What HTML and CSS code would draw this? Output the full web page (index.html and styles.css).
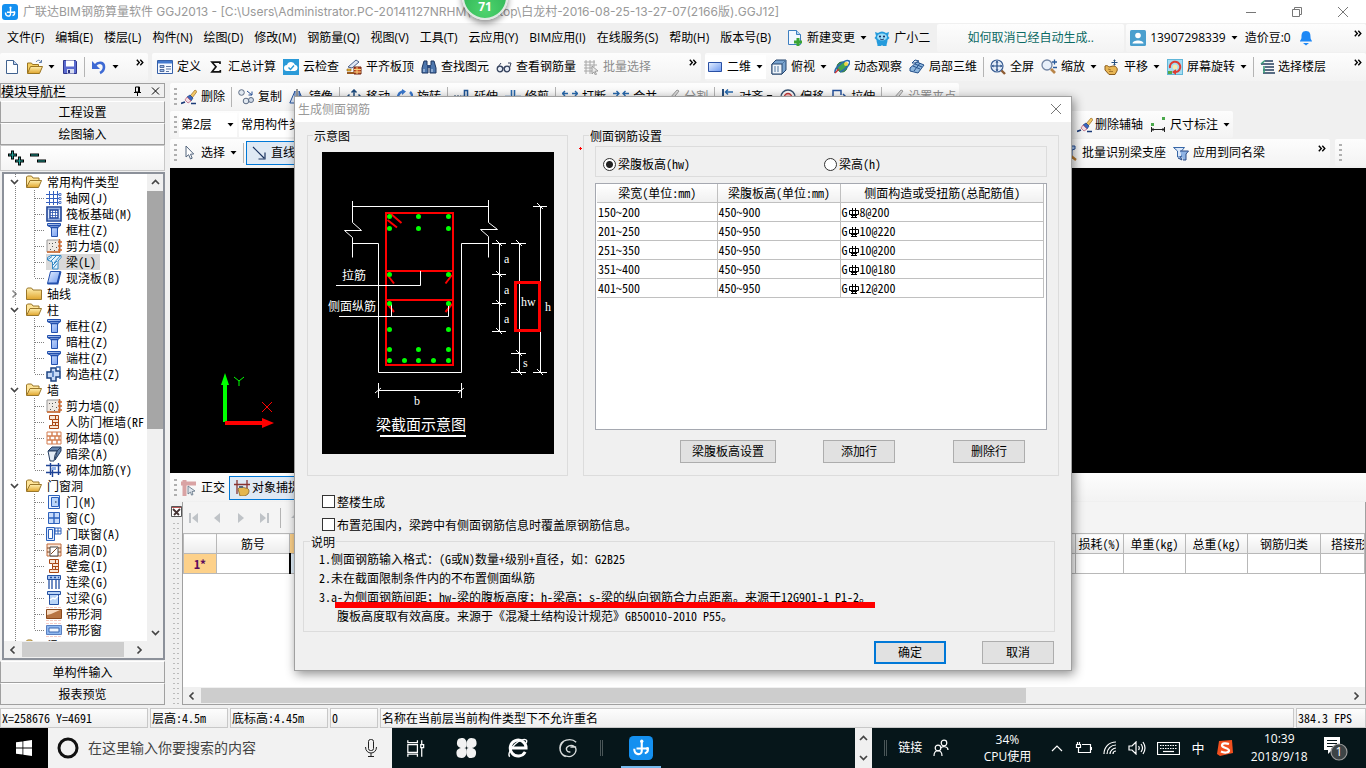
FILE: index.html
```html
<!DOCTYPE html>
<html lang="zh-CN">
<head>
<meta charset="utf-8">
<title>广联达BIM钢筋算量软件 GGJ2013</title>
<link rel="stylesheet" href="styles.css">
</head>
<body>
<svg class="sprite" aria-hidden="true">
  <defs>
    <linearGradient id="blueFill" x1="0" y1="0" x2="1" y2="1"><stop offset="0" stop-color="#e8f1ff"/><stop offset="1" stop-color="#6c98f0"/></linearGradient>
    <linearGradient id="goldFill" x1="0" y1="0" x2="0" y2="1"><stop offset="0" stop-color="#fff0b0"/><stop offset="1" stop-color="#e0a52c"/></linearGradient>
  </defs>
  <symbol id="app" viewBox="0 0 16 16"><rect width="16" height="16" rx="3" fill="#1490f0"/><path d="M8.500 3.500V10c0 3-5 3-5-1.500M5 8.300h7.500c.3 2-.8 3-2 3.200" fill="none" stroke="#fff" stroke-width="1.400"/><circle cx="8.500" cy="3.500" r="1.100" fill="#fff"/><circle cx="12.300" cy="8.300" r="1" fill="#fff"/></symbol>
  <symbol id="new" viewBox="0 0 16 16"><path d="M2.500 1.500h7l4 4v9h-11z" fill="#fdfeff" stroke="#41628f"/><path d="M9.500 1.500v4h4" fill="#bcd0ee" stroke="#41628f"/></symbol>
  <symbol id="open" viewBox="0 0 16 16"><path d="M.5 14V4h4l1 1.500h6V7" fill="#f5cf62" stroke="#9a7420"/><path d="M.5 14.500 3.500 7.500h12l-3 7z" fill="url(#goldFill)" stroke="#9a7420"/><path d="M9 3c2-2.500 4-2 5 0M14.500 1v2.500H12" fill="none" stroke="#5d7ba8"/></symbol>
  <symbol id="save" viewBox="0 0 16 16"><path d="M1.500 1.500h12l1 1v12h-13z" fill="#5b6bd0" stroke="#30378c"/><path d="M4 1.500h8v6H4z" fill="#fff"/><path d="M5 10h7v4.500H5z" fill="#d7dcf0"/><path d="M6 11h2v3H6z" fill="#27307c"/></symbol>
  <symbol id="undo" viewBox="0 0 16 16"><path d="M4 6.500C7.500 2.500 13 3 13 8c0 3-2 5-4 6" fill="none" stroke="#3e6ad4" stroke-width="2.600"/><path d="M1 2v8h8z" fill="#3e6ad4"/></symbol>
  <symbol id="define" viewBox="0 0 16 16"><path d="M.5 1.500h15v13H.5z" fill="#f4f8ff" stroke="#355fa8"/><path d="M1 2h14v2.500H1z" fill="#4379ce"/><path d="M3 6.500h4v2H3zM3 10.500h4v2H3zM9 7.500h5M9 10h5M9 12.500h3" fill="#9bb9e8" stroke="#39568a" stroke-width=".8"/></symbol>
  <symbol id="sigma" viewBox="0 0 16 16"><path d="M12 5V3.200H4l4 4.600-4 5h8.300V11" fill="none" stroke="#111" stroke-width="1.700"/></symbol>
  <symbol id="cloud" viewBox="0 0 16 16"><rect width="16" height="16" fill="#2a9ad8"/><path d="M4 12a3 3 0 0 1 0-6 4.200 4.200 0 0 1 8-.3A3.200 3.200 0 0 1 12 12z" fill="#fff"/><path d="m5.500 8.500 2 2L11 6.500" fill="none" stroke="#2a9ad8" stroke-width="1.400"/></symbol>
  <symbol id="slabtop" viewBox="0 0 16 16"><path d="M2 8 10 1l3 2-7 6z" fill="#dfe7f3" stroke="#4a5f88"/><path d="M8 8h7v7H8z" fill="#c84e28" stroke="#6c2410"/><path d="M8 10.500h7M8 13h7M11 8v7" stroke="#f6d27c"/><path d="M1 13h7v2H1z" fill="#9a5a20"/><path d="M1 10h4v2H1z" fill="#f0bd3a" stroke="#8a5b13" stroke-width=".6"/></symbol>
  <symbol id="binoc" viewBox="0 0 16 16"><path d="M3 2h3v4l1 1v7H1V9zM10 2h3l2 7v5H9V7l1-1z" fill="#4d76ad" stroke="#1d355f"/><path d="M6 6h4v3H6z" fill="#2c4a7c"/><path d="M3 10v3M11 10v3" stroke="#cfe0f6"/></symbol>
  <symbol id="glasses" viewBox="0 0 16 16"><circle cx="4" cy="10" r="2.800" fill="#e6ecf6" stroke="#34415c" stroke-width="1.300"/><circle cx="11" cy="10" r="2.800" fill="#e6ecf6" stroke="#34415c" stroke-width="1.300"/><path d="M6.500 9h2M2 8 5 4M13.500 9l1.500-5-3 0" fill="none" stroke="#34415c"/></symbol>
  <symbol id="batch" viewBox="0 0 16 16"><path d="M1 3h11M1 6h13M1 9h8M1 12h8M3 1v14M7 1v14M11 1v7" stroke="#a8a8a8" fill="none"/><path d="m9 7 6 5-3 .3 1.500 3-1.200.6-1.400-3L9 15z" fill="#e8e8e8" stroke="#8c8c8c" stroke-width=".8"/></symbol>
  <symbol id="plane" viewBox="0 0 16 16"><path d="M1.500 3.500h13v9h-13z" fill="url(#blueFill)" stroke="#2a50a4"/></symbol>
  <symbol id="cube" viewBox="0 0 16 16"><path d="M1 5 5 1h10v10l-4 4H1z" fill="#7aa4cf" stroke="#24446d"/><path d="M1 5h10v10H1z" fill="#eef4fa" stroke="#24446d"/><path d="M11 5l4-4M4 7v6M7 7v6" stroke="#50769e"/></symbol>
  <symbol id="orbit" viewBox="0 0 16 16"><circle cx="8" cy="8" r="5" fill="#44a54e" stroke="#1d6a38"/><path d="M1 14C0 8 12 0 15 2s-4 9-9 11" fill="none" stroke="#2b6bb0" stroke-width="1.600"/><circle cx="12" cy="5" r="2" fill="#f0d645"/><path d="m1 14 4-4" stroke="#c33" stroke-width="1.500"/></symbol>
  <symbol id="part3d" viewBox="0 0 16 16"><path d="M1 9 8 3l7 3-6 8-8-2z" fill="#8db5dc" stroke="#24508a"/><path d="M4 7l7 3M6 5l7 3M5 12l6-8" stroke="#24508a" fill="none"/><path d="m3 4 3-3 4 1-4 2z" fill="#d9e8f7" stroke="#24508a"/></symbol>
  <symbol id="full" viewBox="0 0 16 16"><circle cx="7" cy="7" r="6" fill="#e5eef9" stroke="#3b5f94" stroke-width="1.200"/><path d="M7 2.500v9M2.500 7h9" stroke="#234a84" stroke-width="1.200"/><path d="M7 1.500 5.500 3.500h3zM7 12.500l-1.500-2h3zM1.500 7l2-1.500v3zM12.500 7l-2-1.500v3z" fill="#234a84"/><path d="m11.500 11.500 3.500 3.500" stroke="#8c5a32" stroke-width="2.400"/></symbol>
  <symbol id="zoom" viewBox="0 0 16 16"><circle cx="6" cy="6" r="5" fill="#e8f0fa" stroke="#7386a4" stroke-width="1.300"/><path d="m10 10 4 4" stroke="#b98548" stroke-width="2.600"/><path d="M11 3h5M13.500.5v5M12 8.500h4" stroke="#2c5d9d" stroke-width="1.300"/></symbol>
  <symbol id="pan" viewBox="0 0 16 16"><path d="M1 7c2-1 3 0 4 1l4-1c3 0 5 2 4 5l-2 3.500H5L1 11z" fill="#e8b655" stroke="#8a5c1c"/><path d="M4 10l3 1M5 12.500h4" stroke="#a8792c"/><path d="M10.500.5v6M7.500 3.500h6M9.500 1.500h2M9.500 5.500h2" stroke="#27507f"/></symbol>
  <symbol id="rotscreen" viewBox="0 0 16 16"><rect x=".5" y=".5" width="15" height="15" fill="#a3dcf2" stroke="#60b6d8"/><path d="M3 9a5.200 5.200 0 1 1 6 4" fill="none" stroke="#df3c32" stroke-width="2"/><path d="M9 10v6l-4-3z" fill="#df3c32"/><circle cx="8" cy="8" r="2.500" fill="#f6e9b0"/><path d="M1 12h4v3H1z" fill="#57a948"/></symbol>
  <symbol id="floors" viewBox="0 0 16 16"><path d="M5 2h8M1 5h13M5 8h9M3 11h11M3 14h12" stroke="#243f5e" stroke-width="1.600"/><path d="M1 5 5 1.500M4 7v7" stroke="#3a9a78" stroke-width="1.600"/></symbol>
  <symbol id="change" viewBox="0 0 16 16"><path d="M1.500.5h8l4 4v10h-12z" fill="#f3f8ff" stroke="#3d7fc0"/><path d="M9.500.5v4h4" fill="#b6d4f1" stroke="#3d7fc0"/><path d="M11 8v8M7 12h8" stroke="#3aa535" stroke-width="3"/></symbol>
  <symbol id="mascot" viewBox="0 0 16 16"><path d="M1 2 4 3a6 6 0 0 1 8 0l3-1-1 4 1.500 2-2 2c0 3-1 3-1 6H9l-1-1-1 1H3.500c0-3-1-3-1-6l-2-2L2 6z" fill="#259bdc"/><ellipse cx="8" cy="7" rx="5" ry="3.600" fill="#9bdcf8"/><circle cx="6" cy="6.500" r="1" fill="#125"/><circle cx="10" cy="6.500" r="1" fill="#125"/><path d="M6 9q2 1.500 4 0" fill="none" stroke="#125" stroke-width=".8"/></symbol>
  <symbol id="user" viewBox="0 0 16 16"><rect width="16" height="16" rx="1.500" fill="#4a9fce"/><circle cx="8" cy="5.500" r="2.800" fill="#fff"/><path d="M2.500 13.500c0-4 11-4 11 0z" fill="#fff"/></symbol>
  <symbol id="bell" viewBox="0 0 16 16"><path d="M8 1c4 0 4.500 3 4.500 6s1.500 3 1.500 4.500H2c0-1.500 1.500-1.500 1.500-4.500S4 1 8 1zM5 13h6l-3 2.500z" fill="#1e88f5"/></symbol>
  <symbol id="eraser" viewBox="0 0 16 16"><path d="M9 7 14 1l2 1.500-4.500 6z" fill="#f3c766" stroke="#9a6b22" stroke-width=".7"/><path d="m6 8 3-2 3 3-2 3z" fill="#3a66bd" stroke="#1d3d80" stroke-width=".7"/><path d="m4 11 2-3 4 4-3 2z" fill="#f4dfe5" stroke="#b0526e" stroke-width=".7"/><path d="M0 14.500 4 13M10 14.500h5" stroke="#1a3a78" stroke-width="1.700"/></symbol>
  <symbol id="copy" viewBox="0 0 16 16"><circle cx="3.500" cy="3.500" r="2.800" fill="#e1e8f0" stroke="#5c6c84"/><circle cx="8" cy="12" r="2.800" fill="#e1e8f0" stroke="#5c6c84"/><circle cx="13" cy="11" r="2.500" fill="#cfd9e6" stroke="#5c6c84"/><path d="m9 2 5 4M14 2.500V6h-3.500" fill="none" stroke="#274f93"/></symbol>
  <symbol id="mirror" viewBox="0 0 16 16"><path d="M6 2v12H.8z" fill="#dce6f6" stroke="#24529c"/><path d="M10 2v12h5.200z" fill="#7ba2e0" stroke="#24529c"/><path d="M8 0v16" stroke="#333"/></symbol>
  <symbol id="move" viewBox="0 0 16 16"><path d="M8 1v14M1 8h14M5.500 3.500 8 1l2.500 2.500M5.500 12.500 8 15l2.500-2.500M3.500 5.500 1 8l2.500 2.500M12.500 5.500 15 8l-2.500 2.500" fill="none" stroke="#1d4b7d" stroke-width="1.500"/></symbol>
  <symbol id="rotate" viewBox="0 0 16 16"><path d="M3 13A6 6 0 0 1 7 2.500M13 3a6 6 0 0 1-4 10.500" fill="none" stroke="#3a78cd" stroke-width="2.400"/><path d="m5 0 4 2.500L5 6zM11 10l-4 3.500 4 2.500z" fill="#3a78cd"/></symbol>
  <symbol id="extend" viewBox="0 0 16 16"><path d="M0 7.500h7" stroke="#24446d" stroke-width="2" stroke-dasharray="2 1"/><path d="M7 7.500h4M10.500 10V1.500h3V14" fill="none" stroke="#1f5595" stroke-width="1.600"/></symbol>
  <symbol id="trim" viewBox="0 0 16 16"><path d="M0 7.500h5M11 7.500h5M6.500 1v13M9.500 1v13" stroke="#2869ad" stroke-width="1.600"/></symbol>
  <symbol id="break" viewBox="0 0 16 16"><path d="M0 4.500h6M10 4.500h6M3 2 .5 4.500 3 7M13 2l2.500 2.500L13 7M3 12h10" fill="none" stroke="#2869ad" stroke-width="1.400"/></symbol>
  <symbol id="merge" viewBox="0 0 16 16"><path d="M0 4.500h6M10 4.500h6M3.500 2 6 4.500 3.500 7M12.500 2 10 4.500 12.500 7M3 12h10" fill="none" stroke="#2869ad" stroke-width="1.400"/></symbol>
  <symbol id="split" viewBox="0 0 16 16"><path d="M1 9h5l7-8 2 1-7 9H1z" fill="#ddd" stroke="#999"/></symbol>
  <symbol id="align" viewBox="0 0 16 16"><path d="M2 0v15" stroke="#123d72" stroke-width="1.800"/><path d="M4 8h9M5 3h7M7 .5 4.500 3 7 5.500" fill="none" stroke="#2869ad" stroke-width="1.500"/></symbol>
  <symbol id="offset" viewBox="0 0 16 16"><path d="M1 14V8a7 7 0 0 1 14 0v6" fill="none" stroke="#35506f" stroke-width="1.400"/><path d="M4.500 14V8a3.500 3.500 0 0 1 7 0v6" fill="#f8caca" stroke="#c23939" stroke-width="1.400"/></symbol>
  <symbol id="stretch" viewBox="0 0 16 16"><path d="M2 14V1.500h8V6" fill="none" stroke="#24529c" stroke-width="1.500"/><path d="M5 8h10M12 5l3 3-3 3" fill="none" stroke="#24529c" stroke-width="1.500"/></symbol>
  <symbol id="cursor" viewBox="0 0 16 16"><path d="m5 1 0 11 2.600-2.300L9.500 14l1.700-.8L9.500 9.200l3.200-.2z" fill="#fff" stroke="#53657d"/></symbol>
  <symbol id="line" viewBox="0 0 16 16"><path d="m2 2 11 11M14 7.500V14H7.500" fill="none" stroke="#1b3460" stroke-width="1.200"/></symbol>
  <symbol id="dim" viewBox="0 0 16 16"><path d="M1.500 10v5M14.500 10v5M1.500 12.500h13M3.500 11 2 12.500 3.500 14M12.500 11l1.500 1.500-1.500 1.500" fill="none" stroke="#222"/><path d="M1 6h3v3H1zM12 0h3v3h-3z" fill="#4aa84b"/></symbol>
  <symbol id="recog" viewBox="0 0 16 16"><path d="M1 1h12v3l-3 1v9H5V5L1 4z" fill="#a9c6ef" stroke="#264f96"/><circle cx="6" cy="8" r="3.500" fill="#eef5fc" stroke="#4f6a93"/><path d="m9 11 5 4" stroke="#b5782e" stroke-width="2.400"/></symbol>
  <symbol id="apply" viewBox="0 0 16 16"><path d="M.5 2.500h11l-3 3.500v6h-4V6z" fill="#dbe8fa" stroke="#3766a6"/><path d="M7 6h8.500l-2.500 3v6h-3M5 13l4 2-2-4" fill="#8fb3e4" stroke="#2b4b85"/></symbol>
  <symbol id="ortho" viewBox="0 0 16 16"><path d="M0 3.500h15M3.500 0v16" stroke="#d9a3a4" stroke-width="4"/><path d="m7 6 7 5-3 .6 1 3-1.500.5-1-3L7 14z" fill="#dfe5ec" stroke="#5e7081" stroke-width=".8"/></symbol>
  <symbol id="snap" viewBox="0 0 16 16"><path d="M3 0v14M13 0v9M0 4.500h16" stroke="#883330" stroke-width="1.300"/><path d="M4 9c2-3 5-2 7-1 4 0 5 3 3 6l-3 2H6z" fill="#e5b64e" stroke="#81602a" stroke-width=".8"/><path d="M5 7h4" stroke="#567" stroke-width="2"/></symbol>
  <symbol id="folderopen" viewBox="0 0 16 16"><path d="M.5 13V3l1-1h4l1.500 2h6v3" fill="#ffe599" stroke="#9a772a"/><path d="M.5 13.500 4 6.500h11.500l-3 7z" fill="url(#goldFill)" stroke="#9a772a"/></symbol>
  <symbol id="folder" viewBox="0 0 16 16"><path d="M.5 3.500 1.500 2h4L7 4h8.500v9.500H.5z" fill="url(#goldFill)" stroke="#9a772a"/></symbol>
  <symbol id="axisgrid" viewBox="0 0 16 16"><path d="M3.500 1v14M7.500 1v14M11.500 1v14M0 4.500h13M0 8.500h13M0 12.500h13" stroke="#3560c0"/><path d="M13 3.500h2v2h-2zM13 7.500h2v2h-2zM13 11.500h2v2h-2z" fill="#fff" stroke="#3560c0" stroke-width=".8"/></symbol>
  <symbol id="raft" viewBox="0 0 16 16"><path d="M1 1h14v14H1z" fill="#dceaff" stroke="#1e4396" stroke-width="1.600"/><path d="M4 4h8v8H4z" fill="#fff" stroke="#1e4396" stroke-width="1.400"/><path d="M6.500 4v8M9.500 4v8M4 6.500h8M4 9.500h8M2 3h12M2 13h12" stroke="#2a57b0" stroke-width=".8"/></symbol>
  <symbol id="column" viewBox="0 0 16 16"><path d="M1.500 1.500h13v2l-3 2v9h-6v-9l-4-2z" fill="url(#blueFill)" stroke="#2350ad"/><path d="M1.500 3.500h13M4.500 5.500h8" stroke="#2350ad" stroke-width="1.500"/></symbol>
  <symbol id="wall" viewBox="0 0 16 16"><path d="M1 2h13v12H1z" fill="#eee9e4" stroke="#999"/><path d="M3 5h1v1H3zM6 8h1v1H6zM9 4h1v1H9zM4 11h1v1H4zM10 9h1v1h-1zM8 12h1v1H8zM6 5h1v1H6z" fill="#555"/><path d="M13.500 1v14M12 4h4M12 8h4M12 12h4M1 14h13" stroke="#d0682c" stroke-width="1.400"/></symbol>
  <symbol id="beam" viewBox="0 0 16 16"><path d="M1.500 3.500 5 1.500h10v2L12 7v8H6.500V8L1.500 6z" fill="#e4f3fd" stroke="#3588c4"/><path d="m2 5.500 4-3M5 7l5-5M8 9l6-7M7 14.500l4-5M7 11l4-4" stroke="#3588c4"/></symbol>
  <symbol id="slab" viewBox="0 0 16 16"><path d="M4.500 1.500h10l-3 12h-10z" fill="url(#blueFill)" stroke="#2350ad"/><path d="M1.500 13.500h10l3-12" fill="none" stroke="#2350ad" stroke-width="2"/></symbol>
  <symbol id="structcol" viewBox="0 0 16 16"><path d="M5 2h5v3h4v6h-4v4H5v-3H1V6h4z" fill="#c5d9f6" stroke="#1d4382" stroke-width="1.500"/><path d="M10 1h4v3M13 12h2M7 5v6" stroke="#3667b0" fill="none" stroke-width="1.400"/></symbol>
  <symbol id="niche" viewBox="0 0 16 16"><path d="M3.500 1.500h9v13h-9v-3h3v-6h-3z" fill="#f9e6d6" stroke="#a94714"/><path d="M7 5.500h5M7 8.500h5M7 11.500h5M9.500 1.500v4M9.500 8.500v3" stroke="#a94714"/></symbol>
  <symbol id="brick" viewBox="0 0 16 16"><path d="M1 2h14v12H1z" fill="#fff" stroke="#d37f52"/><path d="M1 6h14M1 10h14M6 2v4M11 2v4M4 6v4M9 6v4M13 6v4M6 10v4M11 10v4" stroke="#d37f52" stroke-width="1.400"/></symbol>
  <symbol id="darkbeam" viewBox="0 0 16 16"><path d="M2 5 6 1h9l-4 4zM11 5l4-4v4l-6 9z" fill="#6482aa" stroke="#253d61"/><path d="M2 5h9l-2 4-1 6H4z" fill="#e3ebf5" stroke="#253d61"/></symbol>
  <symbol id="reinf" viewBox="0 0 16 16"><path d="M0 3.500h15M0 10.500h15M4.500 1v12M12.500 1v12M6.500 6v9" fill="none" stroke="#1e4396" stroke-width="1.400"/><path d="M6 5h4v3H6z" fill="#8fb0ea"/></symbol>
  <symbol id="door" viewBox="0 0 16 16"><path d="M2.500 1.500h11v13h-11z" fill="#eef5ff" stroke="#2d61bb"/><path d="M5.500 3.500h7v9h-7z" fill="#b9d5fb" stroke="#2d61bb"/><path d="M9 8h1.500" stroke="#123"/></symbol>
  <symbol id="window" viewBox="0 0 16 16"><path d="M2.500 2.500h11v11h-11z" fill="#c8dcfb" stroke="#2d61bb"/><path d="M8 2.500v11M2.500 8h11" stroke="#2d61bb" stroke-width="1.400"/></symbol>
  <symbol id="doorwin" viewBox="0 0 16 16"><path d="M.5 1.500h8v13h-8z" fill="#dbe8fc" stroke="#2d61bb"/><path d="M2.500 3.500h4v9h-4zM9 2h6v6H9zM12 2v6M9 5h6" fill="#fff" stroke="#2d61bb"/></symbol>
  <symbol id="wallhole" viewBox="0 0 16 16"><path d="M1 2h14v12H1z" fill="#fbe5d5" stroke="#c06a3a"/><path d="M4 5h8v9H4z" fill="#fff" stroke="#444"/><path d="m5 12 6-6M1 6h3M1 10h3M12 6h3M12 10h3" stroke="#7c4a2a"/></symbol>
  <symbol id="linkbeam" viewBox="0 0 16 16"><path d="M1.500 1.500h13v4h-13z" fill="#a9c6f2" stroke="#2451a3"/><path d="M3 6v9M6 6v9M10 6v9M13 6v9M4 3.500h2M8 3.500h2M12 3.500h1" stroke="#2451a3" stroke-width="1.300"/></symbol>
  <symbol id="lintel" viewBox="0 0 16 16"><path d="M1.500 1.500h13v3h-13zM3.500 4.500h9v10h-9z" fill="#b9d4f7" stroke="#2451a3"/><path d="m4 10 3-2 2 1 3-3" fill="none" stroke="#fff" stroke-width="1.400"/></symbol>
  <symbol id="striphole" viewBox="0 0 16 16"><path d="M.5 3.500h15v9H.5z" fill="#b87543" stroke="#8a4a1e"/><path d="M1 4h13L5 8 1 9z" fill="#f7d9bd"/><path d="M0 1.500h16M0 14.500h16" stroke="#f3c6be" stroke-dasharray="3 1"/></symbol>
  <symbol id="stripwin" viewBox="0 0 16 16"><path d="M.5 3.500h15v9H.5z" fill="#8fb8ef" stroke="#5a7fc0"/><path d="M3 6h10v4H3z" fill="#f1f7ff" stroke="#3d66b0"/><path d="M0 1.500h16M0 14.500h16" stroke="#f5cbc6" stroke-dasharray="3 1"/></symbol>
  <symbol id="caret" viewBox="0 0 7 4"><path d="M.5 0h6l-3 3.500z" fill="#000"/></symbol>
  <symbol id="more" viewBox="0 0 8 7"><path d="M.8.8 3.300 3.500.8 6.200M4.300.8l2.500 2.700-2.500 2.700" fill="none" stroke="#000" stroke-width="1.400"/></symbol>
  <symbol id="chev" viewBox="0 0 9 6"><path d="m1 1 3.500 3.500L8 1" fill="none" stroke="#444" stroke-width="1.700"/></symbol>
  <symbol id="rebar" viewBox="0 0 10 10"><path d="M3.500 0v9M6.500 0v9M2 7.500h6M2 9.500h6M.5 2.500h9v4h-9z" fill="none" stroke="#000"/></symbol>
  <symbol id="close" viewBox="0 0 12 12"><path d="m1 1 10 10M11 1 1 11" stroke="#777" fill="none"/></symbol>
</svg>

<header class="titlebar">
  <svg class="icon"><use href="#app"/></svg>
  <h1 class="titlebar-text">广联达BIM钢筋算量软件 GGJ2013 - [C:\Users\Administrator.PC-20141127NRHM\Desktop\白龙村-2016-08-25-13-27-07(2166版).GGJ12]</h1>
  <div class="window-buttons">
    <button aria-label="最小化"><svg viewBox="0 0 12 12"><path d="M1 6.500h10" stroke="#777"/></svg></button>
    <button aria-label="还原"><svg viewBox="0 0 12 12"><path d="M1.500 3.500h7v7h-7zM3.500 3.500v-2h7v7h-2" fill="none" stroke="#777"/></svg></button>
    <button aria-label="关闭"><svg viewBox="0 0 12 12"><use href="#close"/></svg></button>
  </div>
</header>

<nav class="menubar">
  <div class="menus">
    <button>文件(F)</button><button>编辑(E)</button><button>楼层(L)</button><button>构件(N)</button><button>绘图(D)</button><button>修改(M)</button><button>钢筋量(Q)</button><button>视图(V)</button><button>工具(T)</button><button>云应用(Y)</button><button>BIM应用(I)</button><button>在线服务(S)</button><button>帮助(H)</button><button>版本号(B)</button>
  </div>
  <button class="tool"><svg class="icon"><use href="#change"/></svg>新建变更<svg class="caret"><use href="#caret"/></svg></button>
  <button class="tool"><svg class="icon"><use href="#mascot"/></svg>广小二</button>
  <div class="bar tip-bar"><a href="#help" class="tip">如何取消已经自动生成..</a></div>
  <div class="bar bar-fill">
    <button class="tool"><svg class="icon"><use href="#user"/></svg>13907298339<svg class="caret"><use href="#caret"/></svg></button>
    <button class="tool">造价豆:0</button>
    <button class="tool" aria-label="通知"><svg class="icon"><use href="#bell"/></svg></button>
    <svg class="more"><use href="#more"/></svg>
  </div>
</nav>

<div class="toolbar-row">
  <div class="bar bar-file">
    <button class="tool" aria-label="新建"><svg class="icon"><use href="#new"/></svg></button>
    <button class="tool" aria-label="打开"><svg class="icon"><use href="#open"/></svg><svg class="caret"><use href="#caret"/></svg></button>
    <button class="tool" aria-label="保存"><svg class="icon"><use href="#save"/></svg></button>
    <i class="sep"></i>
    <button class="tool" aria-label="撤销"><svg class="icon"><use href="#undo"/></svg><svg class="caret"><use href="#caret"/></svg></button>
    <svg class="more"><use href="#more"/></svg>
  </div>
  <div class="bar bar-main">
    <button class="tool"><svg class="icon"><use href="#define"/></svg>定义</button>
    <button class="tool"><svg class="icon"><use href="#sigma"/></svg>汇总计算</button>
    <button class="tool"><svg class="icon"><use href="#cloud"/></svg>云检查</button>
    <button class="tool"><svg class="icon"><use href="#slabtop"/></svg>平齐板顶</button>
    <button class="tool"><svg class="icon"><use href="#binoc"/></svg>查找图元</button>
    <button class="tool"><svg class="icon"><use href="#glasses"/></svg>查看钢筋量</button>
    <button class="tool" disabled><svg class="icon"><use href="#batch"/></svg>批量选择</button>
    <svg class="more"><use href="#more"/></svg>
  </div>
  <div class="bar bar-fill bar-view">
    <div class="combo combo-view"><svg class="icon"><use href="#plane"/></svg><select aria-label="视图模式"><option>二维</option></select><svg class="caret"><use href="#caret"/></svg></div>
    <button class="tool"><svg class="icon"><use href="#cube"/></svg>俯视<svg class="caret"><use href="#caret"/></svg></button>
    <button class="tool"><svg class="icon"><use href="#orbit"/></svg>动态观察</button>
    <button class="tool"><svg class="icon"><use href="#part3d"/></svg>局部三维</button>
    <i class="sep"></i>
    <button class="tool"><svg class="icon"><use href="#full"/></svg>全屏</button>
    <button class="tool"><svg class="icon"><use href="#zoom"/></svg>缩放<svg class="caret"><use href="#caret"/></svg></button>
    <button class="tool"><svg class="icon"><use href="#pan"/></svg>平移<svg class="caret"><use href="#caret"/></svg></button>
    <button class="tool"><svg class="icon"><use href="#rotscreen"/></svg>屏幕旋转<svg class="caret"><use href="#caret"/></svg></button>
    <i class="sep"></i>
    <button class="tool tight"><svg class="icon"><use href="#floors"/></svg>选择楼层</button>
    <svg class="more"><use href="#more"/></svg>
  </div>
</div>

<div class="workspace">
  <aside class="navigator">
    <div class="nav-title"><h2>模块导航栏</h2>
      <svg viewBox="0 0 9 10"><path d="M2.500 1h4v5h-4zM1 6.500h7M4.500 7v3M5.500 1v5" fill="none" stroke="#000"/></svg>
      <svg viewBox="0 0 9 10"><path d="m1 1.500 7 7M8 1.500l-7 7" stroke="#000"/></svg>
    </div>
    <button class="nav-tab">工程设置</button>
    <button class="nav-tab">绘图输入</button>
    <div class="tree-tools">
      <svg width="42" height="20" viewBox="0 0 42 20"><path d="M1 7h9M5.500 2.500v9M8 13h9M12.500 8.500v9M23 7h9M30 13h9" stroke="#000" stroke-width="3"/><path d="M2 7h7M5.500 3.500v7M9 13h7M12.500 9.500v7M24 7h7M31 13h7" stroke="#22a098" stroke-width="1.200"/></svg>
    </div>
    <div class="tree-box">
      <div class="tree-body">
        <ul class="tree">
          <li><div class="branch"><svg class="chev"><use href="#chev"/></svg><svg class="icon"><use href="#folderopen"/></svg>常用构件类型</div>
            <ul>
              <li><svg class="icon"><use href="#axisgrid"/></svg>轴网(J)</li>
              <li><svg class="icon"><use href="#raft"/></svg>筏板基础(M)</li>
              <li><svg class="icon"><use href="#column"/></svg>框柱(Z)</li>
              <li><svg class="icon"><use href="#wall"/></svg>剪力墙(Q)</li>
              <li class="selected"><span><svg class="icon"><use href="#beam"/></svg>梁(L)</span></li>
              <li><svg class="icon"><use href="#slab"/></svg>现浇板(B)</li>
            </ul></li>
          <li><div class="branch closed"><svg class="chev"><use href="#chev"/></svg><svg class="icon"><use href="#folder"/></svg>轴线</div></li>
          <li><div class="branch"><svg class="chev"><use href="#chev"/></svg><svg class="icon"><use href="#folderopen"/></svg>柱</div>
            <ul>
              <li><svg class="icon"><use href="#column"/></svg>框柱(Z)</li>
              <li><svg class="icon"><use href="#column"/></svg>暗柱(Z)</li>
              <li><svg class="icon"><use href="#column"/></svg>端柱(Z)</li>
              <li><svg class="icon"><use href="#structcol"/></svg>构造柱(Z)</li>
            </ul></li>
          <li><div class="branch"><svg class="chev"><use href="#chev"/></svg><svg class="icon"><use href="#folderopen"/></svg>墙</div>
            <ul>
              <li><svg class="icon"><use href="#wall"/></svg>剪力墙(Q)</li>
              <li><svg class="icon"><use href="#niche"/></svg>人防门框墙(RF</li>
              <li><svg class="icon"><use href="#brick"/></svg>砌体墙(Q)</li>
              <li><svg class="icon"><use href="#darkbeam"/></svg>暗梁(A)</li>
              <li><svg class="icon"><use href="#reinf"/></svg>砌体加筋(Y)</li>
            </ul></li>
          <li><div class="branch"><svg class="chev"><use href="#chev"/></svg><svg class="icon"><use href="#folderopen"/></svg>门窗洞</div>
            <ul>
              <li><svg class="icon"><use href="#door"/></svg>门(M)</li>
              <li><svg class="icon"><use href="#window"/></svg>窗(C)</li>
              <li><svg class="icon"><use href="#doorwin"/></svg>门联窗(A)</li>
              <li><svg class="icon"><use href="#wallhole"/></svg>墙洞(D)</li>
              <li><svg class="icon"><use href="#niche"/></svg>壁龛(I)</li>
              <li><svg class="icon"><use href="#linkbeam"/></svg>连梁(G)</li>
              <li><svg class="icon"><use href="#lintel"/></svg>过梁(G)</li>
              <li><svg class="icon"><use href="#striphole"/></svg>带形洞</li>
              <li><svg class="icon"><use href="#stripwin"/></svg>带形窗</li>
            </ul></li>
          <li><div class="branch"><svg class="chev"><use href="#chev"/></svg><svg class="icon"><use href="#folderopen"/></svg>梁</div></li>
        </ul>
        <div class="vscroll"><svg class="chev up"><use href="#chev"/></svg><div class="vthumb"></div><svg class="chev"><use href="#chev"/></svg></div>
      </div>
      <div class="hscroll"><svg class="chev left"><use href="#chev"/></svg><div class="htrack"><div class="hthumb"></div></div><svg class="chev right"><use href="#chev"/></svg><i class="corner"></i></div>
    </div>
    <button class="nav-tab">单构件输入</button>
    <button class="nav-tab">报表预览</button>
  </aside>

  <main class="stage">
    <div class="bar-line">
      <div class="bar">
        <i class="grip"></i>
        <button class="tool"><svg class="icon"><use href="#eraser"/></svg>删除</button><i class="sep"></i>
        <button class="tool"><svg class="icon"><use href="#copy"/></svg>复制</button>
        <button class="tool"><svg class="icon"><use href="#mirror"/></svg>镜像</button><i class="sep"></i>
        <button class="tool"><svg class="icon"><use href="#move"/></svg>移动</button>
        <button class="tool"><svg class="icon"><use href="#rotate"/></svg>旋转</button><i class="sep"></i>
        <button class="tool"><svg class="icon"><use href="#extend"/></svg>延伸</button>
        <button class="tool"><svg class="icon"><use href="#trim"/></svg>修剪</button><i class="sep"></i>
        <button class="tool"><svg class="icon"><use href="#break"/></svg>打断</button>
        <button class="tool"><svg class="icon"><use href="#merge"/></svg>合并</button>
        <button class="tool" disabled><svg class="icon"><use href="#split"/></svg>分割</button><i class="sep"></i>
        <button class="tool tight"><svg class="icon"><use href="#align"/></svg>对齐<svg class="caret"><use href="#caret"/></svg></button>
        <button class="tool"><svg class="icon"><use href="#offset"/></svg>偏移</button>
        <button class="tool"><svg class="icon"><use href="#stretch"/></svg>拉伸</button><i class="sep"></i>
        <button class="tool" disabled><svg class="icon"><use href="#split"/></svg>设置夹点</button>
      </div>
    </div>
    <div class="bar-line">
      <div class="bar floor-bar">
        <i class="grip"></i>
        <div class="combo"><select aria-label="楼层"><option>第2层</option></select><svg class="caret"><use href="#caret"/></svg></div>
        <div class="combo combo-type"><select aria-label="构件类型"><option>常用构件类型</option></select><svg class="caret"><use href="#caret"/></svg></div>
        <div class="push">
          <button class="tool tight"><svg class="icon"><use href="#eraser"/></svg>删除辅轴</button>
          <button class="tool"><svg class="icon"><use href="#dim"/></svg>尺寸标注<svg class="caret"><use href="#caret"/></svg></button>
        </div>
      </div>
    </div>
    <div class="bar-line">
      <div class="bar draw-bar">
        <i class="grip"></i>
        <button class="tool"><svg class="icon"><use href="#cursor"/></svg>选择<svg class="caret"><use href="#caret"/></svg></button><i class="sep"></i>
        <button class="tool active"><svg class="icon"><use href="#line"/></svg>直线</button>
        <div class="push">
          <button class="tool"><svg class="icon"><use href="#recog"/></svg>批量识别梁支座</button>
          <button class="tool"><svg class="icon"><use href="#apply"/></svg>应用到同名梁</button>
        </div>
        <svg class="more more-wide"><use href="#more"/></svg>
      </div>
      <div class="bar stub"><i class="grip"></i></div>
    </div>
    <div class="canvas">
      <svg width="60" height="60" viewBox="0 0 60 60" role="img" aria-label="坐标轴">
        <path d="M7 12v39" stroke="#0f0" stroke-width="4"/><path d="M7 2 3 14h8z" fill="#0f0"/>
        <path d="M7 52h38" stroke="#f00" stroke-width="4"/><path d="m56 52-12-5v10z" fill="#f00"/>
        <path d="m16 6 5 4 5-4M21 10v5" fill="none" stroke="#0f0"/><path d="m44 31 10 10M54 31 44 41" stroke="#f00"/>
      </svg>
    </div>
    <div class="bar-line">
      <div class="bar snap-bar">
        <i class="grip"></i>
        <button class="tool"><svg class="icon"><use href="#ortho"/></svg>正交</button>
        <button class="tool active tight"><svg class="icon"><use href="#snap"/></svg>对象捕捉</button>
      </div>
    </div>
    <section class="editor">
      <div class="editor-side"><svg width="11" height="11" viewBox="0 0 11 11"><path d="M.5.500h10v10H.5z" fill="#fff" stroke="#555"/><path d="m2 3 6 6M9 3 3 9" stroke="#433" stroke-width="1.800"/><path d="M1 1.500h9" stroke="#b55"/></svg><i class="dots"></i></div>
      <div class="editor-frame">
        <div class="record-nav">
          <svg viewBox="0 0 12 12"><path d="M2 1h2v10H2zM11 1v10L5 6z" fill="#bfc3c7"/></svg>
          <svg viewBox="0 0 12 12"><path d="M9 1v10L3 6z" fill="#bfc3c7"/></svg>
          <svg viewBox="0 0 12 12"><path d="M3 1v10l6-5z" fill="#bfc3c7"/></svg>
          <svg viewBox="0 0 12 12"><path d="M8 1h2v10H8zM1 1v10l6-5z" fill="#bfc3c7"/></svg>
          <i class="sep"></i>
          <svg viewBox="0 0 12 12"><path d="M6 1 1 6h3v5h4V6h3z" fill="#bfc3c7"/></svg>
        </div>
        <div class="rebar-wrap">
          <table class="rebar-table">
            <colgroup><col class="w33"><col class="w73"><col class="w73"><col><col class="w48"><col class="w62"><col class="w62"><col class="w73"><col class="w44"></colgroup>
            <thead><tr><th></th><th>筋号</th><th class="hot">直径</th><th></th><th>损耗(%)</th><th>单重(kg)</th><th>总重(kg)</th><th>钢筋归类</th><th class="cut">搭接形式</th></tr></thead>
            <tbody><tr><th class="rowhead">1*</th><td></td><td class="cursor"></td><td></td><td></td><td></td><td></td><td></td><td></td></tr></tbody>
          </table>
        </div>
        <div class="hscroll"><svg class="chev left"><use href="#chev"/></svg><div class="htrack"><div class="hthumb wide"></div></div><svg class="chev right"><use href="#chev"/></svg></div>
      </div>
    </section>
  </main>
</div>

<footer class="status">
  <span class="w148">X=258676 Y=4691</span><span class="w78">层高:4.5m</span><span class="w98">底标高:4.45m</span><span class="w48">0</span><span class="fill">名称在当前层当前构件类型下不允许重名</span><span class="w70">384.3 FPS</span>
</footer>

<div class="taskbar">
  <button class="start" aria-label="开始"><svg width="16" height="16" viewBox="0 0 16 16"><path d="M0 2.300 6.500 1.400v6.200H0zM7.300 1.300 16 0v7.600H7.300zM0 8.400h6.500v6.200L0 13.700zM7.300 8.400H16V16l-8.700-1.300z" fill="#fff"/></svg></button>
  <div class="search">
    <svg width="24" height="24" viewBox="0 0 24 24"><circle cx="12" cy="12" r="9" fill="none" stroke="#111" stroke-width="3"/></svg>
    <input type="text" aria-label="搜索" placeholder="在这里输入你要搜索的内容">
    <svg width="14" height="20" viewBox="0 0 14 20"><rect x="4.500" y="1.500" width="5" height="11" rx="2" fill="none" stroke="#222"/><path d="M1.500 9c0 8 11 8 11 0M7 15v3M4 18.500h6" fill="none" stroke="#222"/></svg>
  </div>
  <div class="apps">
    <svg viewBox="0 0 24 24"><path d="M4 8.500h10v8H4zM4 4v2.500h10V4M4 21v-2.500h10V21M18.500 4v4M18.500 11v10M17.500 8.500h3v3h-3z" fill="none" stroke="#fff" stroke-width="1.300"/></svg>
    <svg viewBox="0 0 24 24"><g fill="#f2f2f2"><path d="M11.500 11.500C8 13 2 12 2 7s3-5.500 6-5.500S13.500 6 11.500 11.500z"/><path d="M12.500 11.500C11 8 12 1.500 17 1.500s5.500 3 5.500 6-4.500 6-10 4z"/><path d="M12.500 12.500c3.500-1.500 9.500-.5 9.500 4.500s-3 5.500-6 5.500-5.500-4.500-3.500-10z"/><path d="M11.500 12.500c1.500 3.500.5 10-4.500 10s-5.500-3-5.500-6 4.500-6 10-4z"/></g></svg>
    <svg viewBox="0 0 24 24"><path d="M20 16a8.300 8.300 0 1 1 1-4H6" fill="none" stroke="#fff" stroke-width="3"/><path d="M4 21C0 18 10 4 19 3c3 0 3 2 2 4" fill="none" stroke="#fff" stroke-width="1.500"/></svg>
    <svg viewBox="0 0 24 24"><path d="M20 6C15 1 3 3 3 12s12 12 16 5c3-6-3-9-7-7s-2 7 2 6M7 5c-7 7-3 14 2 16M20 11h-6" fill="none" stroke="#d8dcdc" stroke-width="1.400"/></svg>
    <i class="task-sep"></i>
    <span class="running"><svg viewBox="0 0 16 16"><use href="#app"/></svg></span>
  </div>
  <div class="mini-scroll"><svg class="chev up"><use href="#chev"/></svg><svg class="chev"><use href="#chev"/></svg></div>
  <div class="tray">
    <i class="task-sep"></i><span>链接</span>
    <svg width="16" height="18" viewBox="0 0 16 18"><circle cx="5" cy="9" r="2.800"/><path d="M1 17c0-7 8-7 8 0M8 9c1-2 7-2 7 2"/><circle cx="11" cy="4" r="2.800"/></svg>
    <span class="stack cpu"><span>34%</span><span>CPU使用</span></span>
    <svg width="12" height="8" viewBox="0 0 12 8"><path d="m1 7 5-5 5 5"/></svg>
    <svg width="17" height="14" viewBox="0 0 17 14"><path d="M7 3.500h8.500v8H6M3.500 7v4.500H6M1.500 3.500h4v3h-4zM2.500 3.500V1M4.500 3.500V1M16.500 6v3"/></svg>
    <svg width="14" height="14" viewBox="0 0 14 14"><path d="M1 13C1 6 6 1 13 1M4 13c0-5 4-9 9-9M7 13c0-3 3-6 6-6M10 13c0-2 1-3 3-3"/></svg>
    <svg width="18" height="14" viewBox="0 0 18 14"><path d="M1 5h3l4-4v12L4 9H1zM10.500 5q1.500 2 0 4M13 3q3 4 0 8M15 1q4 6 0 12"/></svg>
    <svg width="23" height="13" viewBox="0 0 23 13"><path d="M.5.500h22v12H.5z"/><path d="M3 3.500h17M3 6.500h17" stroke-dasharray="1.500 1"/><path d="M6 9.500h11"/></svg>
    <span class="ime">中</span>
    <svg width="18" height="18" viewBox="0 0 18 18" class="sogou"><path d="M3 2 16 1l1 13-13 3L1 15z" fill="#f1501f"/><path d="M13 5c-3-1-7-1-7 1.500S13 9 13 11.500 8 14 5 12.500" fill="none" stroke="#fff" stroke-width="2.200"/></svg>
    <span class="stack clock"><span>10:39</span><span>2018/9/18</span></span>
    <span class="note"><svg width="26" height="26" viewBox="0 0 26 26"><path d="M1 2h16v13H9l-4 4v-4H1z" fill="#fff" stroke="none"/><path d="M4 5.500h10M4 8.500h10M4 11.500h6" stroke="#06161a"/><circle cx="16" cy="17" r="8" fill="#3d4446" stroke="#999"/><text x="16" y="21" text-anchor="middle">1</text></svg></span>
  </div>
</div>

<div class="speed-ball">71</div>

<div class="modal-layer">
  <section class="dialog" role="dialog" aria-labelledby="dlg-title">
    <header class="dialog-title"><h2 id="dlg-title">生成侧面钢筋</h2><button aria-label="关闭"><svg width="12" height="12" viewBox="0 0 12 12"><use href="#close"/></svg></button></header>
    <div class="dialog-top">
      <fieldset class="sketch-set"><legend>示意图</legend>
        <svg class="sketch" width="232" height="302" viewBox="0 0 232 302">
          <rect width="232" height="302" fill="#000"/>
          <g fill="none" stroke="#fff">
            <path d="M30.500 54.500h136M30.500 49v21.500l9 8h-17l8 7v20M166.500 48v22.500l9 7h-17l8 7v21M30.500 91.500h26v129h83v-129h27"/>
            <path d="M177.500 91.500v88M170 91.500h14M170 122.500h14M170 151.500h14M170 179.500h14M174 88l6 6M174 119l6 6M174 148l6 6M174 176l6 6"/>
            <path d="M197.500 91.500v129M189 91.500h15M189 201.500h15M189 220.500h15M194 88l6 6M194 198l6 6M194 217l6 6"/>
            <path d="M218.500 54.500v166M211 54.500h14M211 220.500h14M215 51l6 6M215 217l6 6"/>
            <path d="M56.500 238.500h83M56.500 231v15M139.500 231v15M53 241l6-5M136 241l6-5"/>
          </g>
          <path d="M64 61h67v152H64zM64 119h67M64 148h67M65.500 68l9.500 7.500M69 62l10.500 9M65.500 123l6.500 8.500M130 123l-6.500 8.500M65.500 152l6.500 8M130 152l-6.500 8" fill="none" stroke="#f00" stroke-width="2"/>
          <path d="M14 133.500h84.500V119M17 164.500h109.500V152M69.500 152v12.500" fill="none" stroke="#fff"/>
          <g fill="none" stroke="#0f0" stroke-width="5" stroke-linecap="round">
            <path d="M67.500 64.500h0M96.500 64.500h0M126.500 64.500h0M67.500 76.500h0M96.500 76.500h0M126.500 76.500h0M67.500 122.500h0M126.500 122.500h0M67.500 151.500h0M126.500 151.500h0M67.500 177.500h0M126.500 177.500h0M67.500 197.500h0M96.500 197.500h0M126.500 197.500h0M67.500 208.500h0M82.500 208.500h0M96.500 208.500h0M111.500 208.500h0M126.500 208.500h0"/>
          </g>
          <rect x="193.500" y="130.500" width="24" height="48" fill="none" stroke="#f00" stroke-width="3"/>
          <g class="sketch-text"><text x="20" y="128">拉筋</text><text x="6" y="159">侧面纵筋</text><text x="182" y="111">a</text><text x="182" y="142">a</text><text x="182" y="171">a</text><text x="199" y="154">hw</text><text x="223" y="159">h</text><text x="201" y="215">s</text><text x="92" y="253">b</text><text x="54" y="278" class="sketch-caption">梁截面示意图</text></g>
          <path d="M58 284h86" stroke="#fff" stroke-width="2"/>
        </svg>
      </fieldset>
      <fieldset class="setup-set"><legend>侧面钢筋设置</legend>
        <div class="setup">
          <div class="radio-box">
            <label><input type="radio" name="basis" checked>梁腹板高(hw)</label>
            <label><input type="radio" name="basis">梁高(h)</label>
          </div>
          <div class="grid-box">
            <table class="grid">
              <colgroup><col class="g1"><col class="g2"><col></colgroup>
              <thead><tr><th>梁宽(单位:mm)</th><th>梁腹板高(单位:mm)</th><th>侧面构造或受扭筋(总配筋值)</th></tr></thead>
              <tbody>
                <tr><td>150~200</td><td>450~900</td><td>G<svg class="rebar"><use href="#rebar"/></svg>8@200</td></tr>
                <tr><td>201~250</td><td>450~950</td><td>G<svg class="rebar"><use href="#rebar"/></svg>10@220</td></tr>
                <tr><td>251~350</td><td>450~950</td><td>G<svg class="rebar"><use href="#rebar"/></svg>10@200</td></tr>
                <tr><td>351~400</td><td>450~950</td><td>G<svg class="rebar"><use href="#rebar"/></svg>10@180</td></tr>
                <tr><td>401~500</td><td>450~950</td><td>G<svg class="rebar"><use href="#rebar"/></svg>12@200</td></tr>
              </tbody>
            </table>
          </div>
          <div class="row-buttons"><button class="btn">梁腹板高设置</button><button class="btn">添加行</button><button class="btn">删除行</button></div>
        </div>
      </fieldset>
    </div>
    <div class="checks">
      <label><input type="checkbox">整楼生成</label>
      <label><input type="checkbox">布置范围内，梁跨中有侧面钢筋信息时覆盖原钢筋信息。</label>
    </div>
    <fieldset class="notes"><legend>说明</legend>
      <p>1.侧面钢筋输入格式：(G或N)数量+级别+直径<span class="full">，如：</span>G2B25</p>
      <p>2.未在截面限制条件内的不布置侧面纵筋</p>
      <p class="marked">3.a-为侧面钢筋间距；hw-梁的腹板高度；h-梁高；s-梁的纵向钢筋合力点距离。来源于12G901-1 P1-2。</p>
      <p class="indent">腹板高度取有效高度。来源于《混凝土结构设计规范》GB50010-2010 P55。</p>
    </fieldset>
    <div class="dialog-actions"><button class="btn primary">确定</button><button class="btn">取消</button></div>
    <svg class="mark" width="3" height="3" viewBox="0 0 3 3"><path d="M0 1.500h3M1.500 0v3" stroke="#f00"/></svg>
  </section>
</div>
</body>
</html>
```
FILE: styles.css
```css
* { box-sizing: border-box; }

body {
  margin: 0;
  height: 100vh;
  display: flex;
  flex-direction: column;
  position: relative;
  overflow: hidden;
  background: #f0f0f0;
  color: #000;
  font: 12px/16px "Open Sans", "Noto Sans CJK SC", sans-serif;
}

button, select, input { font: inherit; color: inherit; }
button { border: 0; background: none; padding: 0; white-space: nowrap; }
h1, h2, p, ul { margin: 0; padding: 0; font-size: inherit; font-weight: normal; }
ul { list-style: none; }
svg { display: block; flex: none; }
.sprite { position: absolute; width: 0; height: 0; }
.icon { width: 16px; height: 16px; }
.caret { width: 7px; height: 4px; margin-left: 1px; }
.more { width: 8px; height: 7px; margin: 0 4px 10px auto; }
.chev { width: 9px; height: 6px; }
.chev.up { transform: rotate(180deg); }
.chev.left { transform: rotate(90deg); }
.chev.right { transform: rotate(-90deg); }

/* title bar */
.titlebar { flex: none; height: 23px; display: flex; align-items: center; padding-left: 2px; gap: 5px; background: #fff; color: #999; }
.titlebar-text { flex: 1; white-space: nowrap; overflow: hidden; font-family: Inter, "Noto Sans CJK SC", sans-serif; }
.window-buttons { display: flex; }
.window-buttons button { width: 46px; display: flex; justify-content: center; }
.window-buttons svg { width: 12px; height: 12px; }

/* menu and toolbars */
.menubar { flex: none; height: 30px; display: flex; align-items: center; }
.menus { display: flex; padding: 0 6px 0 2px; }
.menus button { padding: 0 6px 0 5px; }
.bar { height: 28px; display: flex; align-items: center; background: linear-gradient(#fdfdfd, #f3f3f3); border-radius: 2px; }
.bar-fill { flex: 1; min-width: 0; }
.tip-bar { width: 187px; margin: 0 2px 0 4px; justify-content: center; }
.tip { color: #0b6a64; text-decoration: none; }
.tool { display: flex; align-items: center; gap: 4px; height: 24px; padding: 0 3px 0 4px; flex: none; }
.tool:disabled { color: #8c8c8c; }
.tool.tight { gap: 2px; }
.tool.active { background: #dfe9f4; border: 1px solid #0078d7; }
.sep { width: 1px; height: 20px; margin: 0 2px 0 3px; background: #b4b4b4; flex: none; }
.toolbar-row { flex: none; display: flex; gap: 4px; height: 28px; }
.bar-file { width: 148px; }
.bar-main { width: 549px; padding-left: 1px; }
.bar-fill .combo-view { margin-right: 1px; }
.combo { display: flex; align-items: center; height: 24px; padding: 0 3px 0 2px; background: #fff; width: 58px; }
.combo select { appearance: none; border: 0; background: none; padding: 0; flex: 1; min-width: 0; outline: 0; }
.combo-view { width: 61px; gap: 4px; }

/* workspace */
.workspace { flex: 1; min-height: 0; display: flex; gap: 5px; padding-top: 2px; }
.navigator { width: 165px; flex: none; display: flex; flex-direction: column; padding-bottom: 2px; font: 12px/16px "Noto Sans CJK SC", sans-serif; font-feature-settings: "hwid"; }
.nav-title { height: 15px; flex: none; display: flex; align-items: center; gap: 9px; padding-right: 4px; border: 1px solid #a0a0a0; margin-bottom: 3px; }
.nav-title h2 { flex: 1; font-size: 13px; line-height: 13px; }
.nav-title svg { width: 9px; height: 10px; }
.nav-tab { height: 22px; flex: none; border: 1px solid #a0a0a0; border-top-color: #fff; text-align: center; }
.tree-tools { height: 26px; flex: none; display: flex; align-items: center; padding-left: 6px; border: 1px solid #c8c8c8; background: linear-gradient(#fff, #f4f4f4); }
.tree-box { flex: 1; min-height: 0; display: flex; flex-direction: column; margin: 1px 0 1px 2px; border: 2px solid #8c919a; background: #fff; }
.tree-body { flex: 1; min-height: 0; display: flex; }
.tree { flex: 1; min-width: 0; overflow: hidden; white-space: nowrap; }
.tree > li { background: repeating-linear-gradient(#808080 0 1px, transparent 1px 2px) 11px 0 / 1px 100% no-repeat; }
.branch { height: 16px; display: flex; align-items: center; padding-left: 6px; }
.branch .chev { height: 8px; padding: 1px 0; background: #fff; margin-right: 7px; }
.branch.closed .chev { transform: rotate(-90deg); opacity: .6; }
.branch .icon { margin-right: 5px; }
.tree ul { margin-left: 30px; background: repeating-linear-gradient(#808080 0 1px, transparent 1px 2px) 0 0 / 1px calc(100% - 8px) no-repeat; }
.tree ul li { height: 16px; display: flex; align-items: center; }
.tree ul li::before { content: ""; width: 9px; margin: 0 2px 0 1px; border-top: 1px dotted #808080; flex: none; }
.tree ul .icon { margin-right: 4px; }
.selected span { display: flex; background: #d9d9d9; padding-right: 4px; }
.vscroll { width: 16px; flex: none; display: flex; flex-direction: column; align-items: center; justify-content: space-between; padding: 5px 0; background: #f0f0f0; }
.vthumb { width: 100%; height: 238px; background: #a6a6a6; margin: 6px 0 auto; }
.hscroll { height: 17px; flex: none; display: flex; align-items: center; padding: 0 4px; gap: 5px; background: #f0f0f0; }
.htrack { flex: 1; height: 15px; }
.hthumb { height: 100%; width: 94%; background: #cdcdcd; }
.hthumb.wide { width: 72%; }
.corner { width: 10px; }

.stage { flex: 1; min-width: 0; display: flex; flex-direction: column; }
.bar-line { flex: none; display: flex; padding-bottom: 1px; }
.bar-line .bar { height: 27px; padding-left: 4px; }
.grip { width: 3px; height: 18px; flex: none; background: repeating-linear-gradient(#b0b0b0 0 2px, transparent 2px 5px); }
.floor-bar { flex: 1; margin-right: 133px; gap: 2px; }
.combo-type { width: 120px; }
.bar-line .draw-bar { flex: 1; height: 28px; margin-right: 5px; }
.push { display: flex; margin-left: auto; }
.more-wide { margin-left: 50px; }
.stub { width: 31px; }
.canvas { flex: 1; min-height: 0; background: #000; display: flex; align-items: flex-end; padding: 0 0 42px 48px; }
.bar-line .snap-bar { flex: 1; height: 28px; padding-top: 1px; }
.snap-bar .active { margin-left: 1px; }
.editor { height: 203px; flex: none; display: flex; margin-bottom: 2px; }
.editor-side { width: 12px; display: flex; flex-direction: column; align-items: center; gap: 4px; padding-top: 4px; }
.dots { flex: 1; width: 8px; background: radial-gradient(circle, #bbb 1px, transparent 1px) 0 0 / 4px 5px; }
.editor-frame { flex: 1; min-width: 0; display: flex; flex-direction: column; border: solid #a0a0a0; border-width: 0 1px 1px; background: #fff; }
.record-nav { height: 31px; flex: none; display: flex; align-items: center; gap: 12px; padding-left: 4px; background: #f4f4f4; }
.record-nav svg { width: 12px; height: 12px; }
.record-nav .sep { margin: 0 -3px; }
.rebar-wrap { flex: 1; overflow: hidden; }
.rebar-table { width: 100%; table-layout: fixed; border-collapse: collapse; font: 12px/16px "Noto Sans CJK SC", sans-serif; font-feature-settings: "hwid"; }
.rebar-table th, .rebar-table td { height: 20px; padding: 0; border: 1px solid #b8b8b8; font-weight: normal; white-space: nowrap; overflow: hidden; }
.rebar-table thead th { background: linear-gradient(#fff, #ececec); }
.rebar-table thead .hot, .rebar-table .rowhead { background: #fdd18a; }
.rebar-table .rowhead { color: #5c0a5c; font-weight: bold; }
.rebar-table .cursor { background: #e2f0fb; border-left: 2px solid #000; }
.rebar-table .cut { text-align: left; padding-left: 10px; }
.w33 { width: 33px; } .w44 { width: 44px; } .w48 { width: 48px; } .w62 { width: 62px; } .w73 { width: 73px; }

/* status bar */
.status { flex: none; height: 21px; display: flex; gap: 2px; padding-top: 1px; font: 12px/18px "Noto Sans CJK SC", sans-serif; font-feature-settings: "hwid"; }
.status span { border: 1px solid #c8c8c8; background: linear-gradient(#fdfdfd, #eee); white-space: nowrap; overflow: hidden; padding-left: 1px; }
.w148 { width: 148px; } .w78 { width: 78px; } .w98 { width: 98px; } .status .w48 { width: 48px; } .w70 { width: 70px; }
.status .fill { flex: 1; }

/* taskbar */
.taskbar { flex: none; height: 40px; display: flex; background: #06161a; color: #fff; }
.start { width: 48px; display: flex; align-items: center; justify-content: center; background: #000; }
.search { width: 344px; display: flex; align-items: center; gap: 8px; padding: 0 14px 0 8px; background: #f2f2f2; }
.search input { flex: 1; min-width: 0; border: 0; padding: 0; background: none; outline: 0; font-size: 14px; line-height: 20px; }
.search input::placeholder { color: #444; opacity: 1; }
.apps { flex: 1; display: flex; align-items: stretch; gap: 28px; padding-left: 12px; }
.apps svg { width: 24px; height: 24px; margin: 8px 0; }
.apps > svg { width: 23px; }
.task-sep { width: 3px; height: 16px; margin: 12px 0; border: solid #4a5658; border-width: 0 1px; flex: none; }
.apps .task-sep { margin-left: -8px; }
.running { padding: 0 8px; margin-left: -10px; border-bottom: 2px solid #76b9ed; }
.mini-scroll { width: 17px; display: flex; flex-direction: column; align-items: center; justify-content: space-between; padding: 7px 0; background: #f0f0f0; }
.tray { width: 494px; display: flex; align-items: center; padding: 0 17px 0 12px; justify-content: space-between; white-space: nowrap; }
.tray svg { fill: none; stroke: #fff; stroke-width: 1.2; }
.tray .sogou { stroke: none; }
.tray .ime { font-size: 13px; }
.stack { display: flex; flex-direction: column; align-items: center; line-height: 17px; }
.cpu { margin: 0 9px 0 23px; }
.clock { line-height: 18px; margin: 0 4px 0 6px; }
.note text { fill: #fff; stroke: none; font-size: 12px; }

/* floating accelerator ball */
.speed-ball { position: absolute; left: 462px; top: -26px; width: 46px; height: 46px; border: 2px solid #dfe9e2; border-radius: 50%; background: radial-gradient(circle at 50% 80%, #4fd46e, #22a84c); box-shadow: 0 3px 6px rgba(0, 0, 0, .45); color: #fff; text-align: center; line-height: 62px; font-size: 12px; font-weight: bold; }

/* dialog */
.modal-layer { position: absolute; inset: 0; display: flex; align-items: center; justify-content: center; padding-bottom: 2px; pointer-events: none; }
.dialog { position: relative; width: 778px; max-width: 100%; pointer-events: auto; border: 1px solid #a0a0a0; background: #f0f0f0; box-shadow: 2px 3px 10px rgba(0, 0, 0, .45); font: 12px/14px "Noto Sans CJK SC", sans-serif; font-feature-settings: "hwid"; }
.dialog-title { height: 25px; display: flex; align-items: center; justify-content: space-between; padding: 0 9px 0 3px; background: #fff; color: #999; }
fieldset { margin: 0; padding: 0 6px; min-width: 0; border: 1px solid #dcdcdc; }
legend { padding: 0 1px; margin-left: -1px; }
.dialog-top { display: flex; gap: 15px; padding: 7px 12px 0; }
.sketch-set { width: 261px; height: 347px; flex: none; }
.sketch { margin: 9px 0 0 8px; }
.sketch-text { fill: #fff; font-size: 12px; font-family: "Liberation Serif", "Noto Sans CJK SC", serif; }
.sketch-caption { font-size: 15px; }
.setup-set { flex: 1; }
.setup { padding: 3px 5px 0; }
.radio-box { height: 31px; padding: 6px 7px 0; display: grid; grid-template-columns: 221px 1fr; align-items: center; border: 1px solid #dcdcdc; }
label { display: flex; align-items: center; gap: 2px; }
.radio-box input, .checks input { appearance: none; flex: none; margin: 0; width: 13px; height: 13px; border: 1px solid #333; background: #fff; }
.radio-box input { border-radius: 50%; }
.radio-box input:checked { background: radial-gradient(circle, #222 3px, #fff 4px); }
.grid-box { height: 247px; margin: 6px 0 10px; padding: 0 2px 0 1px; border: 1px solid #a5a8b0; background: #fff; }
.grid { width: 100%; table-layout: fixed; border-collapse: collapse; }
.grid th, .grid td { height: 19px; padding: 0 0 0 1px; border: solid #c0c0c0; border-width: 0 1px 1px 0; text-align: left; font-weight: normal; line-height: 16px; white-space: nowrap; }
.grid th { text-align: center; background: linear-gradient(#fff, #f0f0f0); }
.g1 { width: 120px; } .g2 { width: 123px; }
.rebar { display: inline-block; width: 10px; height: 10px; margin: 0 1px; vertical-align: -1px; }
.row-buttons { display: grid; grid-template-columns: 143px 130px 72px; padding-left: 85px; justify-items: start; }
.btn { height: 23px; min-width: 72px; padding: 0 11px; border: 1px solid #adadad; background: #e1e1e1; font: inherit; }
.btn.primary { border: 2px solid #0078d7; }
.checks { display: flex; flex-direction: column; gap: 3px; padding: 16px 27px 0; font-feature-settings: normal; }
.checks label { height: 20px; }
.full { font-feature-settings: normal; }
.notes { margin: 0 16px 9px 8px; padding: 0 6px 6px 15px; height: 97px; }
.notes legend { margin-left: -9px; }
.notes p { line-height: 19px; white-space: nowrap; }
.notes .indent { padding-left: 18px; }
.marked { position: relative; }
.marked::after { content: ""; position: absolute; left: 16px; top: 15px; width: 540px; height: 6px; background: #f00; }
.dialog-actions { display: flex; justify-content: flex-end; gap: 36px; padding: 0 17px 6px 0; }
.mark { position: absolute; left: 284px; top: 50px; }
```
